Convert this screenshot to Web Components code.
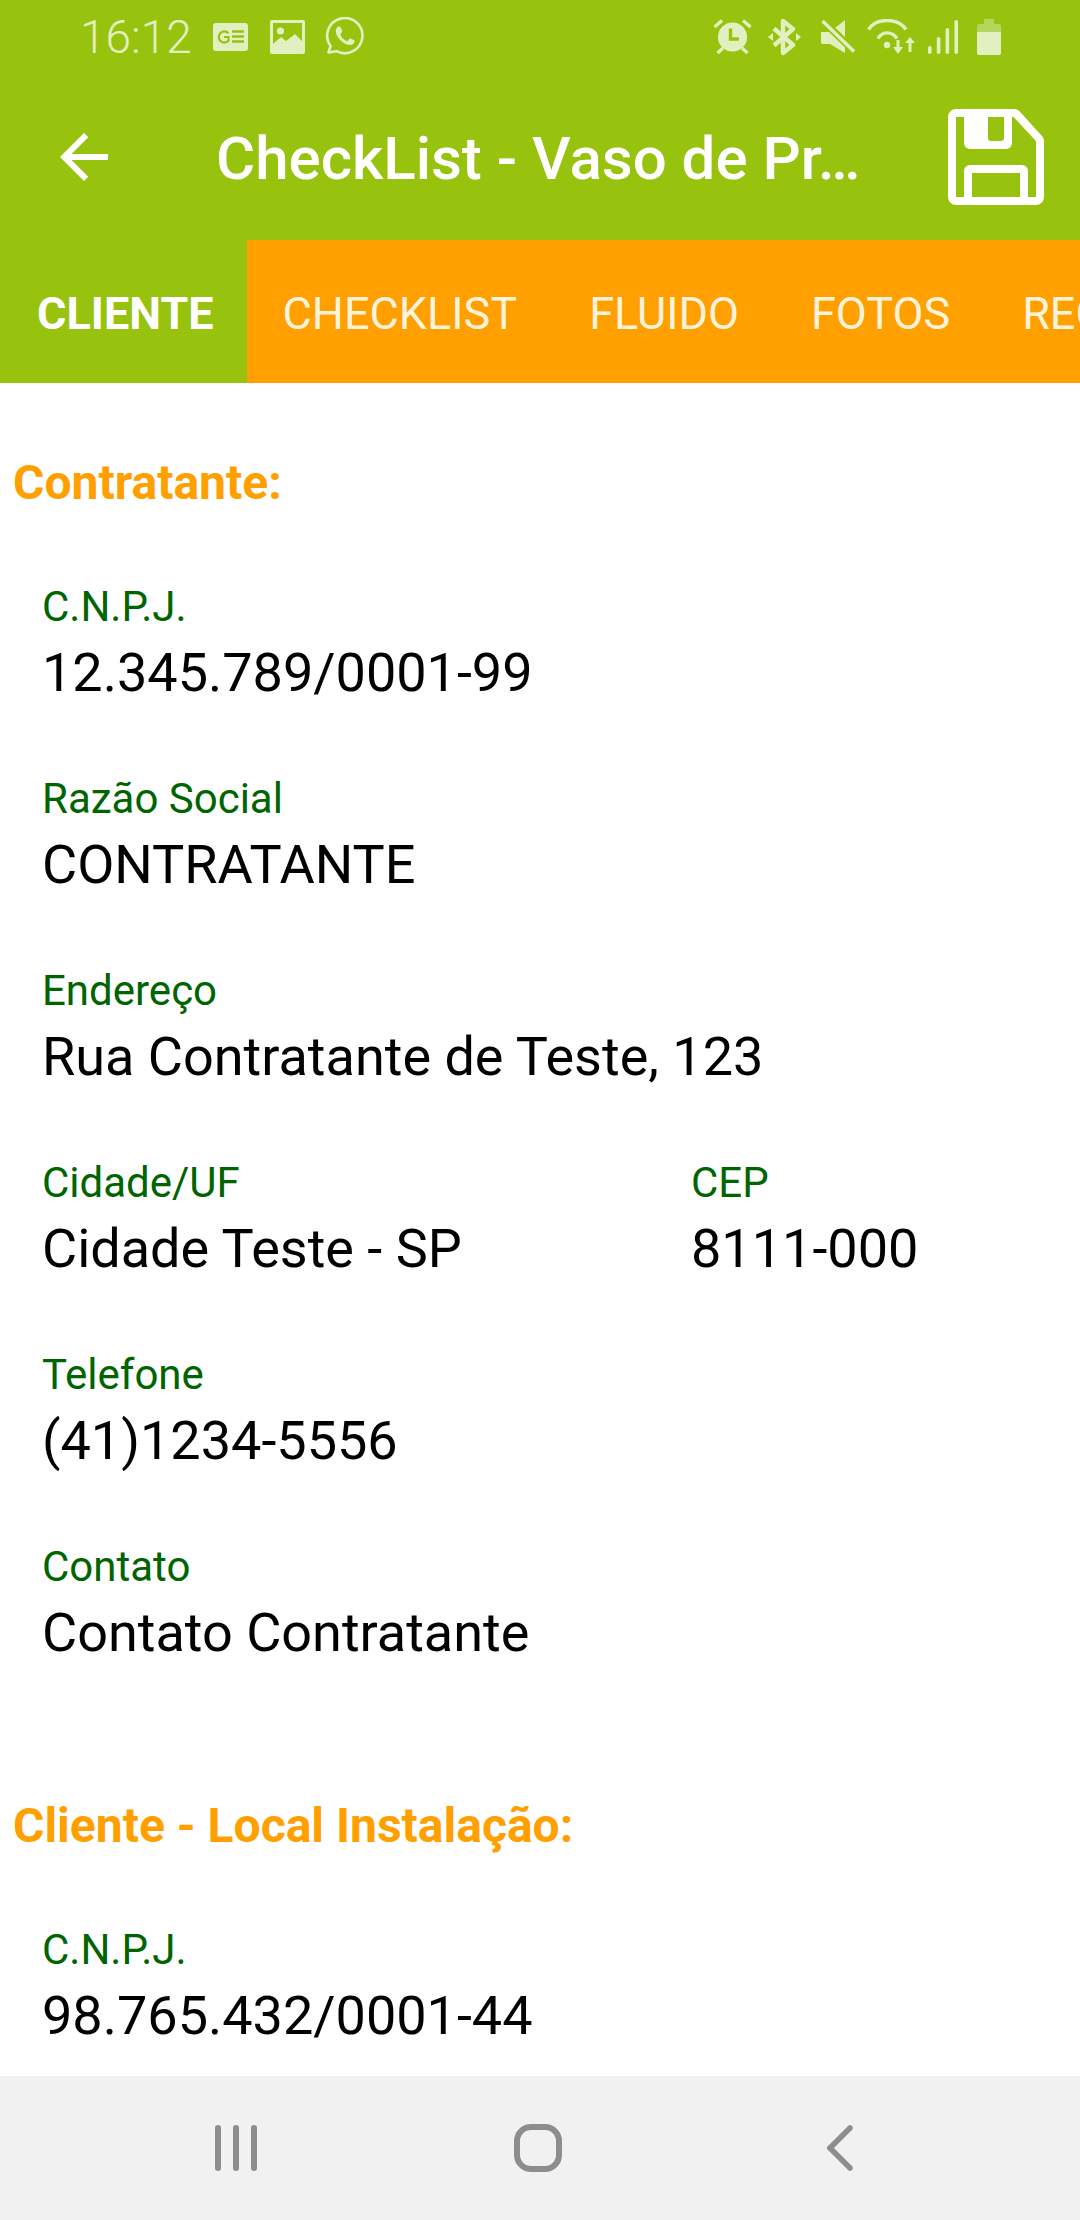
<!DOCTYPE html>
<html lang="pt">
<head>
<meta charset="utf-8">
<title>CheckList</title>
<style>
html,body{margin:0;padding:0;background:#fff}
body{width:1080px;height:2220px;overflow:hidden;font-family:Roboto,"Liberation Sans",sans-serif}
app-screen{--lime:#97c30f;--orange:#ffa000;--fade:#e2efc0}
</style>
</head>
<body>
<template id="t-screen">
<style>
:host{display:flex;flex-direction:column;width:1080px;height:2220px}
main{flex:1;min-height:0;overflow:hidden;background:#fff;display:flex;flex-direction:column;gap:131px;padding-top:70px}
</style>
<status-bar></status-bar>
<app-bar></app-bar>
<tab-bar></tab-bar>
<main><slot></slot></main>
<nav-bar></nav-bar>
</template>

<template id="t-status">
<style>
:host{display:flex;align-items:center;height:73px;background:var(--lime);color:var(--fade);box-sizing:border-box;padding-left:80px}
span{font:300 46px/1 Roboto,sans-serif;width:133px;flex:none}
svg{display:block;flex:none}
.l{display:flex;align-items:center}
.r{display:flex;align-items:center;margin-left:349px}
</style>
<div class="l">
<span>16:12</span>
<svg width="35" height="28" viewBox="0 0 35 28"><rect width="35" height="28" rx="3" fill="#e2efc0"/><path d="M15.5 10.2A5.6 5.6 0 1 0 15.5 17.8V14H11" fill="none" stroke="#97c30f" stroke-width="2.2"/><path d="M19 8.5H31M19 13.5H31M19 18.5H31" stroke="#97c30f" stroke-width="2.4"/></svg>
<svg style="margin-left:22px" width="35" height="34" viewBox="0 0 35 34"><rect width="35" height="34" rx="2" fill="#e2efc0"/><rect x="3" y="3" width="29" height="24" fill="#97c30f"/><circle cx="10.5" cy="11" r="3.6" fill="#e2efc0"/><path d="M3 27V24L11 17L16 21L25 14L32 21V27Z" fill="#e2efc0"/></svg>
<svg style="margin-left:20px" width="39" height="39" viewBox="0 0 39 39"><path d="M3.5 35.5L5.6 29A17.6 17.6 0 1 1 11.6 34.2Z" fill="none" stroke="#e2efc0" stroke-width="2.6" stroke-linejoin="round"/><path d="M13.5 9.5C12 10 10.5 12 10.8 14.8C11.5 20.5 18 27.5 24.5 28C27.5 28.2 29.3 26.5 29.7 24.6C29.8 24 29.6 23.6 29.1 23.3L25.6 21.6C25 21.4 24.6 21.5 24.2 22L22.8 23.7C22.4 24.1 22 24.1 21.5 23.9C18.8 22.8 16.6 20.4 15.6 18C15.4 17.5 15.5 17.2 15.8 16.8L17 15.3C17.3 14.9 17.3 14.5 17.1 14L15.6 10.3C15.3 9.5 14.5 9.2 13.5 9.5Z" fill="#e2efc0"/></svg>
</div>
<div class="r">
<svg width="39" height="35" viewBox="0 0 39 35"><circle cx="19.5" cy="18" r="14.6" fill="#e2efc0"/><path d="M17.5 9.5V20H26" fill="none" stroke="#97c30f" stroke-width="3.4"/><path d="M1.5 8L9 1.5M37.5 8L30 1.5M10 29L4.5 34M29 29L34.5 34" stroke="#e2efc0" stroke-width="3.4"/></svg>
<svg style="margin-left:16px" width="33" height="38" viewBox="0 0 33 38"><path d="M6 10.5L25 27L15 35V3L25 11L6 27.5" fill="none" stroke="#e2efc0" stroke-width="4.4" stroke-linejoin="round"/><path d="M0 19L5 15V23ZM33 19L28 15V23Z" fill="#e2efc0"/></svg>
<svg style="margin-left:20px" width="34" height="33" viewBox="0 0 34 33"><path d="M0 12H9L24 0V33L9 24H2A2 2 0 0 1 0 22Z" fill="#e2efc0"/><path d="M1 0L34 32" stroke="#97c30f" stroke-width="7.4"/><path d="M1.5 1L33 31.5" stroke="#e2efc0" stroke-width="3.4"/></svg>
<svg style="margin-left:12px" width="48" height="36" viewBox="0 0 48 36"><g fill="none" stroke="#e2efc0" stroke-width="3.4"><path d="M1.5 10.5C9 -1.5 31 -1.5 39 10.5"/><path d="M11 19.5C15 12 25 12 30 19.5"/></g><circle cx="20" cy="26" r="3.2" fill="#e2efc0"/><path d="M31 21V30M43 33V22" stroke="#e2efc0" stroke-width="3" fill="none"/><path d="M26 28H36L31 35ZM38 24H48L43 18Z" fill="#e2efc0"/></svg>
<svg style="margin-left:13px" width="30" height="34" viewBox="0 0 30 34"><g fill="#e2efc0"><rect y="26" width="3.6" height="8" rx="1.8"/><rect x="8.8" y="17" width="3.6" height="17" rx="1.8"/><rect x="17.6" y="8" width="3.6" height="26" rx="1.8"/><rect x="26.4" y="0" width="3.6" height="34" rx="1.8"/></g></svg>
<svg style="margin-left:19px" width="24" height="36" viewBox="0 0 24 36"><path d="M7 0H17V5H22A2 2 0 0 1 24 7V13H0V7A2 2 0 0 1 2 5H7Z" fill="#b5d65c"/><path d="M0 13H24V34A2 2 0 0 1 22 36H2A2 2 0 0 1 0 34Z" fill="#e2efc0"/></svg>
</div>
</template>

<template id="t-app">
<style>
:host{display:flex;align-items:center;height:167px;background:var(--lime);color:#fff}
svg{display:block;flex:none}
.back{margin-left:48px}
h1{margin:0 0 0 96px;padding-top:4px;font:500 60px/1 Roboto,sans-serif;white-space:nowrap;width:732px;flex:none}
</style>
<svg class="back" width="72" height="72" viewBox="0 0 24 24"><path d="M20 11H7.83l5.59-5.59L12 4l-8 8 8 8 1.41-1.41L7.83 13H20z" fill="#fff"/></svg>
<h1>CheckList - Vaso de Pr…</h1>
<svg class="save" width="96" height="96" viewBox="0 0 96 96"><path d="M8 0H66C68 0 70 .8 71.5 2.3L93.5 26.5C95 28 96 30 96 32V88A8 8 0 0 1 88 96H8A8 8 0 0 1 0 88V8A8 8 0 0 1 8 0Z M8 8V88H16V62A6 6 0 0 1 22 56H74A6 6 0 0 1 80 62V88H88V33.5C88 32.5 87.5 31.5 87 31L66.5 9C66 8.4 65.2 8 64 8V34A6 6 0 0 1 58 40H22A6 6 0 0 1 16 34V8Z M24 64V88H72V64Z M40 8V29A3 3 0 0 0 43 32H53A3 3 0 0 0 56 29V8Z" fill="#fff" fill-rule="evenodd"/></svg>
</template>

<template id="t-tabs">
<style>
:host{display:flex;height:143px;background:var(--orange);overflow:hidden;font:400 45px/1 Roboto,sans-serif}
</style>
<slot></slot>
</template>

<template id="t-tab">
<style>
:host{display:flex;align-items:center;flex:none;padding:4px 36px 0;white-space:nowrap;color:#fff3dc}
:host([active]){background:var(--lime);color:#fff;font-weight:700;padding:4px 33px 0 37px}
</style>
<slot></slot>
</template>

<template id="t-section">
<style>
:host{display:flex;flex-direction:column;gap:70px}
h2{margin:0;padding-left:13px;font:700 48px/60px Roboto,sans-serif;color:var(--orange)}
</style>
<h2><slot name="title"></slot></h2>
<slot></slot>
</template>

<template id="t-row">
<style>
:host{display:grid;grid-template-columns:649px 1fr}
</style>
<slot></slot>
</template>

<template id="t-field">
<style>
:host{display:block;padding-left:42px}
.l{font:400 42px/48px Roboto,sans-serif;color:#006400}
.v{margin-top:10px;font:400 54px/64px Roboto,sans-serif;color:#000;white-space:nowrap}
</style>
<div class="l"></div>
<div class="v"><slot></slot></div>
</template>

<template id="t-nav">
<style>
:host{display:flex;align-items:center;height:144px;background:#f1f1f1;padding-left:215px;box-sizing:border-box}
svg{display:block;flex:none}
</style>
<svg width="42" height="46" viewBox="0 0 42 46"><g fill="#8d8d8d"><rect width="6" height="46" rx="3"/><rect x="18" width="6" height="46" rx="3"/><rect x="36" width="6" height="46" rx="3"/></g></svg>
<svg style="margin-left:257px" width="48" height="48" viewBox="0 0 48 48"><rect x="3" y="3" width="42" height="42" rx="14" fill="none" stroke="#8d8d8d" stroke-width="6"/></svg>
<svg style="margin-left:265px" width="26" height="46" viewBox="0 0 26 46"><path d="M23 3L3 23L23 43" fill="none" stroke="#8d8d8d" stroke-width="5.5" stroke-linecap="round"/></svg>
</template>

<app-screen>
<form-section>
  <span slot="title">Contratante:</span>
  <form-field label="C.N.P.J.">12.345.789/0001-99</form-field>
  <form-field label="Razão Social">CONTRATANTE</form-field>
  <form-field label="Endereço">Rua Contratante de Teste, 123</form-field>
  <form-row>
    <form-field label="Cidade/UF">Cidade Teste - SP</form-field>
    <form-field label="CEP">8111-000</form-field>
  </form-row>
  <form-field label="Telefone">(41)1234-5556</form-field>
  <form-field label="Contato">Contato Contratante</form-field>
</form-section>
<form-section>
  <span slot="title">Cliente - Local Instalação:</span>
  <form-field label="C.N.P.J.">98.765.432/0001-44</form-field>
</form-section>
</app-screen>

<script>
function def(name, tpl){
  customElements.define(name, class extends HTMLElement{
    constructor(){
      super();
      this.attachShadow({mode:'open'}).appendChild(document.getElementById(tpl).content.cloneNode(true));
    }
  });
}
def('app-screen','t-screen');
def('status-bar','t-status');
def('app-bar','t-app');
def('tab-item','t-tab');
def('tab-bar','t-tabs');
def('form-section','t-section');
def('form-row','t-row');
customElements.define('form-field',class extends HTMLElement{
  constructor(){
    super();
    const r=this.attachShadow({mode:'open'});
    r.appendChild(document.getElementById('t-field').content.cloneNode(true));
    r.querySelector('.l').textContent=this.getAttribute('label')||'';
  }
});
def('nav-bar','t-nav');
const tabs=document.querySelector('app-screen').shadowRoot.querySelector('tab-bar');
[['CLIENTE',1],['CHECKLIST'],['FLUIDO'],['FOTOS'],['REC']].forEach(([t,a])=>{
  const b=document.createElement('tab-item');
  if(a)b.setAttribute('active','');
  b.textContent=t;
  tabs.appendChild(b);
});
</script>
</body>
</html>
